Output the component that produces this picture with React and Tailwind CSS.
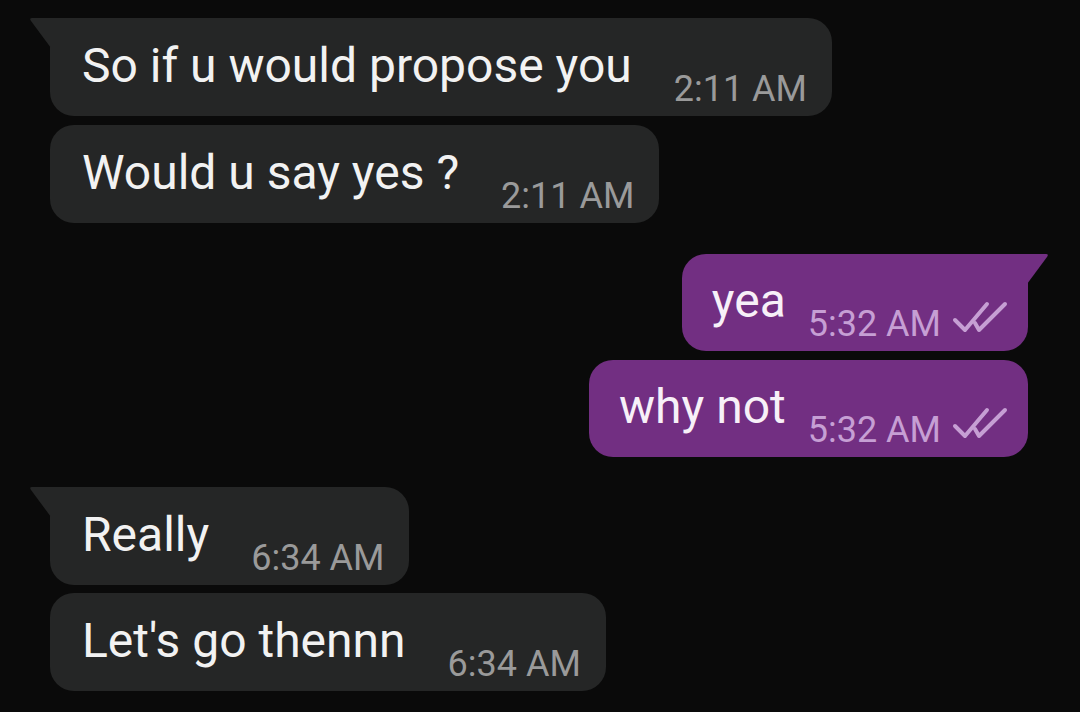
import React from 'react';

const DoubleCheck = () => (
  <svg width="56" height="32" viewBox="0 0 56 32" fill="none" stroke="#c69fd4" strokeWidth="4" strokeLinecap="round" strokeLinejoin="round">
    <path d="M3 19 L13 29 L35 3" />
    <path d="M23 22 L27 29 L53 3" />
  </svg>
);

const InBubble = ({ text, time, tail }) => (
  <div className="relative self-start">
    {tail && (
      <svg className="absolute left-[-21px] top-0" width="22" height="30" viewBox="0 0 22 30">
        <path d="M22 0 L3 0 Q0 0 2 3 L22 30 Z" fill="#252626" />
      </svg>
    )}
    <div className={`flex h-[98px] items-end bg-[#252626] pl-8 pr-[25px] pb-[9px] rounded-[24px] ${tail ? 'rounded-tl-none' : ''}`}>
      <span className="mb-[17px] text-[48px] leading-none text-[#f2f2f2]">{text}</span>
      <span className="ml-[42px] text-[36px] leading-none text-[#9a9a9a]">{time}</span>
    </div>
  </div>
);

const OutBubble = ({ text, time, tail }) => (
  <div className="relative self-end">
    {tail && (
      <svg className="absolute right-[-21px] top-0" width="22" height="30" viewBox="0 0 22 30">
        <path d="M0 0 L19 0 Q22 0 20 3 L0 30 Z" fill="#722f82" />
      </svg>
    )}
    <div className={`flex h-[97px] items-end bg-[#722f82] pl-[30px] pr-[20px] pb-[9px] rounded-[24px] ${tail ? 'rounded-tr-none' : ''}`}>
      <span className="mb-[17px] text-[48px] leading-none text-[#f7f0f8]">{text}</span>
      <span className="ml-[22px] text-[36px] leading-none text-[#c69fd4]">{time}</span>
      <span className="mb-[9px] ml-[11px]"><DoubleCheck /></span>
    </div>
  </div>
);

export default function App() {
  return (
    <div className="h-[712px] w-[1080px] overflow-hidden bg-[#0a0a0a] pt-[18px] pl-[50px] pr-[52px]" style={{ fontFamily: 'Roboto, "Liberation Sans", sans-serif' }}>
      <div className="flex flex-col gap-[9px]">
        <InBubble text="So if u would propose you" time="2:11 AM" tail />
        <InBubble text="Would u say yes ?" time="2:11 AM" />
      </div>
      <div className="mt-[31px] flex flex-col gap-[9px]">
        <OutBubble text="yea" time="5:32 AM" tail />
        <OutBubble text="why not" time="5:32 AM" />
      </div>
      <div className="mt-[30px] flex flex-col gap-[8px]">
        <InBubble text="Really" time="6:34 AM" tail />
        <InBubble text="Let's go thennn" time="6:34 AM" />
      </div>
    </div>
  );
}
